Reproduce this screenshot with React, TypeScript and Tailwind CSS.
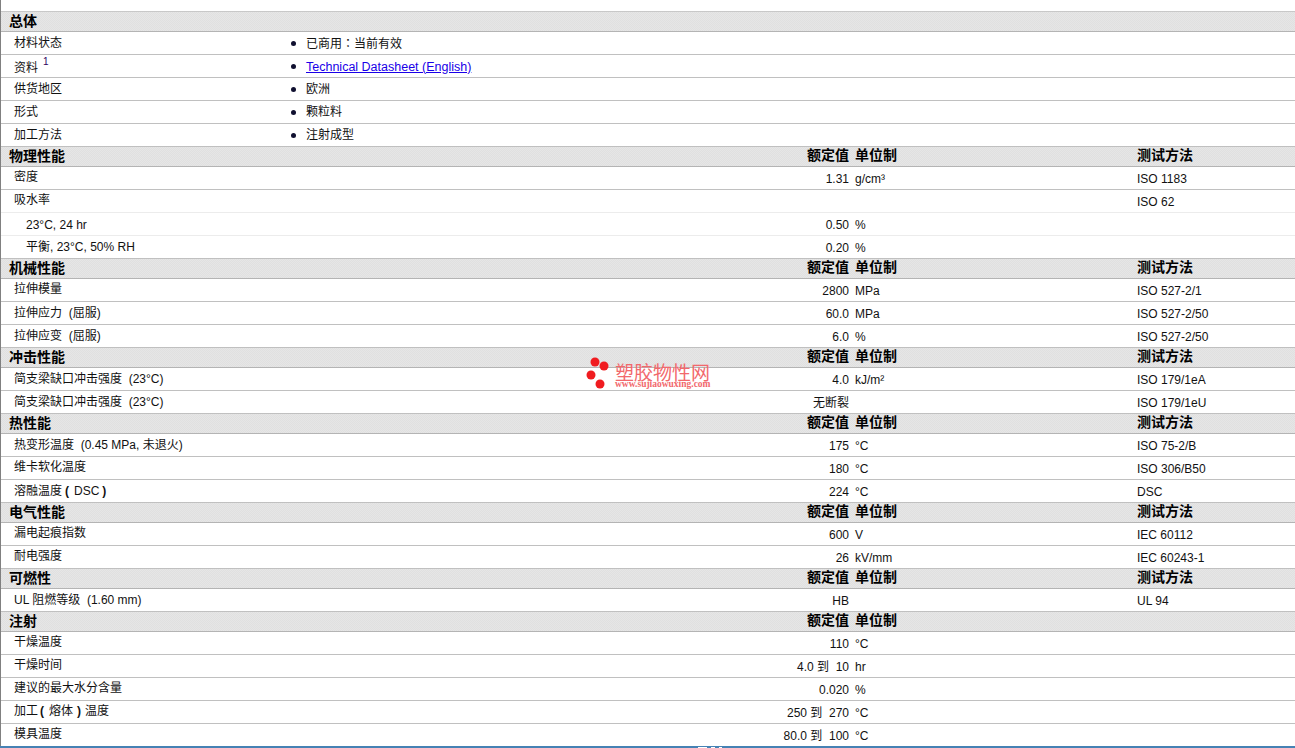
import type { ReactNode } from 'react'

const sans = "font-['Liberation_Sans','Noto_Sans_CJK_SC',sans-serif]"

type Row = {
  label: ReactNode
  value?: string
  unit?: string
  test?: string
  labelClass?: string
  sub?: boolean
  light?: boolean
}

type Section = {
  title: string
  test?: boolean
  rows: Row[]
}

const sections: Section[] = [
  {
    title: '物理性能',
    test: true,
    rows: [
      { label: '密度', value: '1.31', unit: 'g/cm³', test: 'ISO 1183', labelClass: '-translate-y-px' },
      { label: '吸水率', test: 'ISO 62', light: true, labelClass: '-translate-y-px' },
      { label: '23°C, 24 hr', value: '0.50', unit: '%', sub: true, light: true, labelClass: 'translate-y-px' },
      { label: '平衡, 23°C, 50% RH', value: '0.20', unit: '%', sub: true },
    ],
  },
  {
    title: '机械性能',
    test: true,
    rows: [
      { label: '拉伸模量', value: '2800', unit: 'MPa', test: 'ISO 527-2/1', labelClass: '-translate-y-px' },
      { label: '拉伸应力  (屈服)', value: '60.0', unit: 'MPa', test: 'ISO 527-2/50' },
      { label: '拉伸应变  (屈服)', value: '6.0', unit: '%', test: 'ISO 527-2/50' },
    ],
  },
  {
    title: '冲击性能',
    test: true,
    rows: [
      { label: '简支梁缺口冲击强度  (23°C)', value: '4.0', unit: 'kJ/m²', test: 'ISO 179/1eA' },
      { label: '简支梁缺口冲击强度  (23°C)', value: '无断裂', test: 'ISO 179/1eU' },
    ],
  },
  {
    title: '热性能',
    test: true,
    rows: [
      { label: '热变形温度  (0.45 MPa, 未退火)', value: '175', unit: '°C', test: 'ISO 75-2/B' },
      { label: '维卡软化温度', value: '180', unit: '°C', test: 'ISO 306/B50', labelClass: '-translate-y-px' },
      {
        label: (
          <>
            溶融温度<b className="ml-[3px] mr-[5px]">(</b>DSC<b className="ml-[3px]">)</b>
          </>
        ),
        value: '224',
        unit: '°C',
        test: 'DSC',
      },
    ],
  },
  {
    title: '电气性能',
    test: true,
    rows: [
      { label: '漏电起痕指数', value: '600', unit: 'V', test: 'IEC 60112', labelClass: '-translate-y-px' },
      { label: '耐电强度', value: '26', unit: 'kV/mm', test: 'IEC 60243-1', labelClass: '-translate-y-px' },
    ],
  },
  {
    title: '可燃性',
    test: true,
    rows: [{ label: 'UL 阻燃等级  (1.60 mm)', value: 'HB', test: 'UL 94' }],
  },
  {
    title: '注射',
    rows: [
      { label: '干燥温度', value: '110', unit: '°C', labelClass: '-translate-y-px' },
      { label: '干燥时间', value: '4.0 到  10', unit: 'hr', labelClass: '-translate-y-px' },
      { label: '建议的最大水分含量', value: '0.020', unit: '%', labelClass: '-translate-y-px' },
      {
        label: (
          <>
            加工<b className="ml-[2px] mr-[5px]">(</b>熔体<b className="ml-[4px] mr-[4px]">)</b>温度
          </>
        ),
        value: '250 到  270',
        unit: '°C',
        labelClass: '-translate-y-px',
      },
      { label: '模具温度', value: '80.0 到  100', unit: '°C', labelClass: '-translate-y-px' },
    ],
  },
]

const general: { label: string; value: ReactNode; link?: boolean }[] = [
  {
    label: '材料状态',
    value: (
      <>
        已商用<span className="font-['Noto_Sans_CJK_TC',sans-serif]">：</span>当前有效
      </>
    ),
  },
  { label: '资料', value: 'Technical Datasheet (English)', link: true },
  { label: '供货地区', value: '欧洲' },
  { label: '形式', value: '颗粒料' },
  { label: '加工方法', value: '注射成型' },
]

function SectionHeader({ title, columns, test }: { title: string; columns?: boolean; test?: boolean }) {
  return (
    <div className="flex h-[20px] items-center border-b border-[#b4b4b4] bg-[repeating-conic-gradient(#e0e0e0_0%_25%,#e6e6e6_0%_50%)] bg-size-[2px_2px] pb-px text-[14px] font-bold text-black">
      <div className="flex w-[848px] flex-none justify-between pl-[8px]">
        <span>{title}</span>
        {columns && <span className="-translate-y-px">额定值</span>}
      </div>
      <div className="w-[288px] flex-none -translate-y-px pl-[6px]">{columns && '单位制'}</div>
      <div className="-translate-y-px">{test && '测试方法'}</div>
    </div>
  )
}

function DataRow({ row }: { row: Row }) {
  return (
    <div
      className={`flex h-[23px] items-center border-b text-xs text-[#111] ${
        row.light ? 'border-[#ececec]' : 'border-[#c0c0c0]'
      }`}
    >
      <div className={`flex w-[848px] flex-none justify-between ${row.sub ? 'pl-[25px]' : 'pl-[13px]'}`}>
        <span className={`whitespace-pre ${row.labelClass ?? ''}`}>{row.label}</span>
        <span className="translate-y-px whitespace-pre">{row.value}</span>
      </div>
      <div className="w-[288px] flex-none translate-y-px pl-[6px]">{row.unit}</div>
      <div className="translate-y-px">{row.test}</div>
    </div>
  )
}

function Watermark() {
  return (
    <div className="absolute left-[585px] top-[356px] flex">
      <svg width="30" height="34" viewBox="0 0 30 34" className="flex-none">
        <circle cx="10" cy="6" r="4.5" fill="#f01c20" />
        <circle cx="19" cy="10" r="4.5" fill="#f01c20" />
        <circle cx="6" cy="19" r="4.5" fill="#f01c20" />
        <circle cx="15" cy="28" r="4.5" fill="#f01c20" />
      </svg>
      <div className="pt-[8px]">
        <div className="text-[19px] leading-[16px] text-[#f2686c] font-['Noto_Sans_CJK_SC',sans-serif]">塑胶物性网</div>
        <div className="text-[9.5px] font-bold leading-[8px] text-[#f2686c] font-['Liberation_Serif',serif]">
          www.sujiaowuxing.com
        </div>
      </div>
    </div>
  )
}

export default function App() {
  return (
    <div className={`relative h-[748px] w-[1295px] overflow-hidden bg-white ${sans}`}>
      <div className="h-[746px] border-l border-[#808080] pt-[11px]">
        <div className="border-t border-[#c8c8c8]" />
        <SectionHeader title="总体" />
        {general.map((g) => (
          <div key={g.label} className="flex h-[23px] items-center border-b border-[#c0c0c0] text-xs text-[#111]">
            <div className="w-[290px] flex-none pl-[13px]">
              <span className={g.link ? 'inline-block translate-y-[2px]' : undefined}>{g.label}</span>
              {g.link && <sup className="ml-[5px] text-[10px] text-[#300060]">1</sup>}
            </div>
            <div className="flex items-center">
              <span className="mr-[10px] size-[5px] rounded-full bg-[#101030]" />
              {g.link ? (
                <a href="#" className="translate-y-px text-[12.5px] text-[#1a00e8] underline">
                  {g.value}
                </a>
              ) : (
                <span>{g.value}</span>
              )}
            </div>
          </div>
        ))}
        {sections.map((s) => (
          <div key={s.title}>
            <SectionHeader title={s.title} columns test={s.test} />
            {s.rows.map((r, i) => (
              <DataRow key={i} row={r} />
            ))}
          </div>
        ))}
      </div>
      <div className="flex h-[2px] items-end gap-[4px] bg-[#4682b4] pl-[698px]">
        <span className="h-px w-[9px] bg-white" />
        <span className="h-px w-[4px] bg-white" />
        <span className="h-px w-[3px] bg-white" />
      </div>
      <Watermark />
    </div>
  )
}
